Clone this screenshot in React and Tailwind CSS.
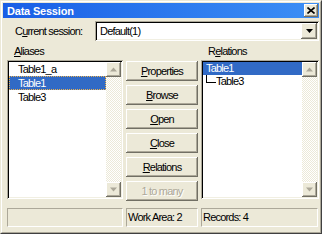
import React from "react";

const raised =
  "shadow-[inset_-1px_-1px_0_#716f64,inset_1px_1px_0_#ffffff,inset_-2px_-2px_0_#aca899]";
const sunken =
  "shadow-[inset_1px_1px_0_#aca899,inset_-1px_-1px_0_#ffffff,inset_2px_2px_0_#000000,inset_-2px_-2px_0_#f1efe2]";

function ArrowBtn({ dir }) {
  return (
    <div className={`w-[15px] h-[15px] bg-[#ece9d8] flex items-center justify-center ${raised}`}>
      <svg width="7" height="5" viewBox="0 0 7 5">
        {dir === "up" ? (
          <polygon points="3.5,0.5 7,4.5 0,4.5" fill="#aca899" />
        ) : (
          <polygon points="0,0.5 7,0.5 3.5,4.5" fill="#aca899" />
        )}
      </svg>
    </div>
  );
}

function ScrollBar() {
  return (
    <div className="flex flex-col w-[15px] h-full shrink-0">
      <ArrowBtn dir="up" />
      <div className="flex-1 bg-[image:repeating-conic-gradient(#ece9d8_0%_25%,#ffffff_0%_50%)] bg-[length:2px_2px]" />
      <ArrowBtn dir="down" />
    </div>
  );
}

function Btn({ children, disabled }) {
  return (
    <div
      className={`h-[20px] flex items-center justify-center bg-[#ece9d8] ${raised} ${
        disabled ? "text-[#aca899] [text-shadow:1px_1px_0_#ffffff]" : ""
      }`}
    >
      <span>{children}</span>
    </div>
  );
}

export default function App() {
  return (
    <div className="w-[322px] h-[234px] bg-[#ece9d8] font-['Liberation_Sans',Arial,sans-serif] text-[11px] text-black tracking-[-0.8px] leading-none select-none">
      <div className="w-full h-full border border-t-[#ece9d8] border-l-[#ece9d8] border-b-[#404040] border-r-[#404040]">
        <div className="w-full h-full border border-t-white border-l-white border-b-[#aca899] border-r-[#aca899] p-[1px] flex flex-col">
          {/* Title bar */}
          <div className="h-[15px] shrink-0 flex items-center bg-linear-to-r from-[#1a5ee6] to-[#3d8ff5] pl-[4px] pr-[1px]">
            <span className="flex-1 text-white font-bold tracking-[-0.2px] pt-[1px]">Data Session</span>
            <div className={`w-[14px] h-[13px] bg-[#ece9d8] flex items-center justify-center ${raised}`}>
              <svg width="8" height="7" viewBox="0 0 8 7">
                <path d="M0.5 0.5 L7.5 6.5 M7.5 0.5 L0.5 6.5" stroke="#000" strokeWidth="1.6" />
              </svg>
            </div>
          </div>

          {/* Current session row */}
          <div className="mt-[3px] h-[20px] shrink-0 flex items-center">
            <div className="w-[92px] pl-[12px] shrink-0">
              C<span className="underline underline-offset-[1px]">u</span>rrent session:
            </div>
            <div className={`flex-1 h-[20px] bg-white p-[2px] flex items-center ${sunken}`}>
              <span className="flex-1 pl-[3px]">Default(1)</span>
              <div className={`w-[16px] h-[16px] bg-[#ece9d8] flex items-center justify-center ${raised}`}>
                <svg width="7" height="4" viewBox="0 0 7 4">
                  <polygon points="0,0 7,0 3.5,4" fill="#000" />
                </svg>
              </div>
            </div>
          </div>

          {/* Main area */}
          <div className="mt-[4px] flex pl-[4px] gap-[3px] shrink-0">
            {/* Aliases */}
            <div className="w-[116px] flex flex-col">
              <div className="h-[13px] flex items-center pl-[7px]">
                <span className="underline underline-offset-[1px]">A</span>liases
              </div>
              <div className={`mt-[2px] h-[139px] bg-white p-[2px] flex ${sunken}`}>
                <div className="flex-1 flex flex-col">
                  <div className="h-[14px] flex items-center pl-[9px]">Table1_a</div>
                  <div className="h-[14px] flex items-center pl-[8px] bg-[#316ac5] text-white border border-dotted border-[#e8b050]">
                    Table1
                  </div>
                  <div className="h-[14px] flex items-center pl-[9px]">Table3</div>
                </div>
                <ScrollBar />
              </div>
            </div>

            {/* Buttons */}
            <div className="w-[72px] pt-[16px] flex flex-col gap-[4px]">
              <Btn>
                <span className="underline underline-offset-[1px]">P</span>roperties
              </Btn>
              <Btn>
                <span className="underline underline-offset-[1px]">B</span>rowse
              </Btn>
              <Btn>
                <span className="underline underline-offset-[1px]">O</span>pen
              </Btn>
              <Btn>
                <span className="underline underline-offset-[1px]">C</span>lose
              </Btn>
              <Btn>
                <span className="underline underline-offset-[1px]">R</span>elations
              </Btn>
              <Btn disabled>1 to many</Btn>
            </div>

            {/* Relations */}
            <div className="w-[118px] flex flex-col">
              <div className="h-[13px] flex items-center pl-[7px]">
                R<span className="underline underline-offset-[1px]">e</span>lations
              </div>
              <div className={`mt-[2px] h-[139px] bg-white p-[2px] flex ${sunken}`}>
                <div className="flex-1 flex flex-col">
                  <div className="h-[13px] flex items-center pl-[3px] bg-[#316ac5] text-white">Table1</div>
                  <div className="h-[13px] flex items-start pl-[3px]">
                    <div className="w-[10px] h-[8px] border-l border-b border-black shrink-0" />
                    <span className="self-center">Table3</span>
                  </div>
                </div>
                <ScrollBar />
              </div>
            </div>
          </div>

          {/* Status bar */}
          <div className="mt-[7px] h-[19px] shrink-0 flex pl-[4px] gap-[3px]">
            <div className="w-[116px] border border-t-[#aca899] border-l-[#aca899] border-b-white border-r-white" />
            <div className="w-[72px] border border-t-[#aca899] border-l-[#aca899] border-b-white border-r-white flex items-center pl-[1px] whitespace-nowrap">
              Work Area: 2
            </div>
            <div className="w-[117px] border border-t-[#aca899] border-l-[#aca899] border-b-white border-r-white flex items-center pl-[1px]">
              Records: 4
            </div>
          </div>
        </div>
      </div>
    </div>
  );
}
